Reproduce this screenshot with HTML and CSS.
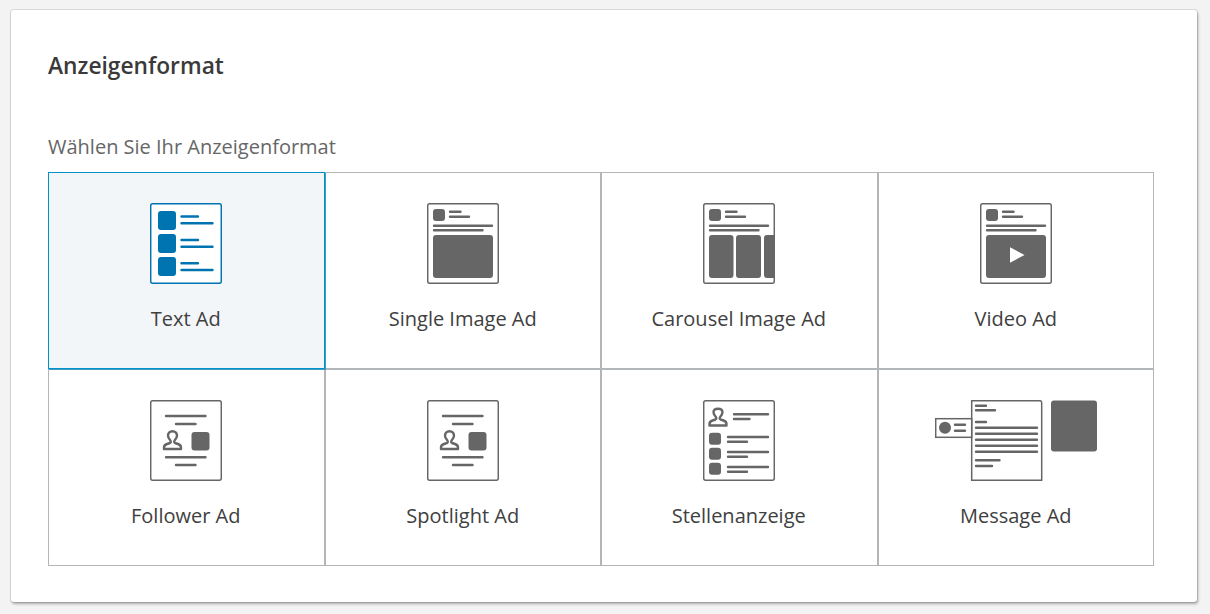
FILE: index.html
```html
<!DOCTYPE html>
<html lang="de">
<head>
<meta charset="utf-8">
<title>Anzeigenformat</title>
<link rel="stylesheet" href="styles.css">
</head>
<body>
<section class="card">
  <h2 class="title">Anzeigenformat</h2>
  <p class="sub">Wählen Sie Ihr Anzeigenformat</p>
  <div class="grid">
    <button class="cell active">
      <svg class="icon" width="72" height="81" viewBox="0 0 72 81">
        <rect class="doc" x="0.7" y="0.7" width="70.6" height="79.6" rx="2"/>
        <rect class="solid" x="8" y="8" width="18" height="19" rx="3"/>
        <rect class="solid" x="8" y="31" width="18" height="19" rx="3"/>
        <rect class="solid" x="8" y="54" width="18" height="19" rx="3"/>
        <path class="ln" d="M31.5 13.5H48M31.5 20.3H62.5M31.5 37H48M31.5 43.7H62.5M31.5 60.3H48M31.5 67H62.5"/>
      </svg>
      <span class="label">Text Ad</span>
    </button>
    <button class="cell">
      <svg class="icon" width="72" height="81" viewBox="0 0 72 81">
        <rect class="doc" x="0.7" y="0.7" width="70.6" height="79.6" rx="2"/>
        <rect class="solid" x="6" y="6" width="12" height="12" rx="3"/>
        <path class="ln" d="M23 8.7H33.5M23 13.7H42M7 22.7H65M7 27.3H55.5"/>
        <rect class="solid" x="6" y="32" width="60" height="43" rx="3"/>
      </svg>
      <span class="label">Single Image Ad</span>
    </button>
    <button class="cell">
      <svg class="icon" width="72" height="81" viewBox="0 0 72 81">
        <rect class="doc" x="0.7" y="0.7" width="70.6" height="79.6" rx="2"/>
        <rect class="solid" x="6" y="6" width="12" height="12" rx="3"/>
        <path class="ln" d="M23 8.7H33.5M23 13.7H42M7 22.7H65M7 27.3H55.5"/>
        <rect class="solid" x="6" y="32" width="24.5" height="43" rx="3"/>
        <rect class="solid" x="33" y="32" width="25" height="43" rx="3"/>
        <path class="solid" d="M64 32H71V75H64A3 3 0 0 1 61 72V35A3 3 0 0 1 64 32Z"/>
      </svg>
      <span class="label">Carousel Image Ad</span>
    </button>
    <button class="cell">
      <svg class="icon" width="72" height="81" viewBox="0 0 72 81">
        <rect class="doc" x="0.7" y="0.7" width="70.6" height="79.6" rx="2"/>
        <rect class="solid" x="6" y="6" width="12" height="12" rx="3"/>
        <path class="ln" d="M23 8.7H33.5M23 13.7H42M7 22.7H65M7 27.3H55.5"/>
        <rect class="solid" x="6" y="32" width="60" height="43" rx="3"/>
        <path class="play" d="M30 44.3L44.5 52L30 59.7Z"/>
      </svg>
      <span class="label">Video Ad</span>
    </button>
    <button class="cell">
      <svg class="icon" width="72" height="81" viewBox="0 0 72 81">
        <rect class="doc" x="0.7" y="0.7" width="70.6" height="79.6" rx="2"/>
        <path class="ln" d="M16 16H55.5M26 24H45.5M16 57.3H55.5M26 65H45.5"/>
        <path class="person" d="M14 49V47.5C14 45.5 15.5 44.5 17 44L20 43C21 42.6 21 41.5 20.4 40.5C19 39 18 37.5 18 35.8C18 33 20 31.2 22.5 31.2S27 33 27 35.8C27 37.5 26 39 24.6 40.5C24 41.5 24 42.6 25 43L28 44C29.5 44.5 31 45.5 31 47.5V49Z"/>
        <rect class="solid" x="41.5" y="32" width="18" height="18.5" rx="3"/>
      </svg>
      <span class="label">Follower Ad</span>
    </button>
    <button class="cell">
      <svg class="icon" width="72" height="81" viewBox="0 0 72 81">
        <rect class="doc" x="0.7" y="0.7" width="70.6" height="79.6" rx="2"/>
        <path class="ln" d="M16 16H55.5M26 24H45.5M16 57.3H55.5M26 65H45.5"/>
        <path class="person" d="M14 49V47.5C14 45.5 15.5 44.5 17 44L20 43C21 42.6 21 41.5 20.4 40.5C19 39 18 37.5 18 35.8C18 33 20 31.2 22.5 31.2S27 33 27 35.8C27 37.5 26 39 24.6 40.5C24 41.5 24 42.6 25 43L28 44C29.5 44.5 31 45.5 31 47.5V49Z"/>
        <rect class="solid" x="41.5" y="32" width="18" height="18.5" rx="3"/>
      </svg>
      <span class="label">Spotlight Ad</span>
    </button>
    <button class="cell">
      <svg class="icon" width="72" height="81" viewBox="0 0 72 81">
        <rect class="doc" x="0.7" y="0.7" width="70.6" height="79.6" rx="2"/>
        <path class="person" d="M6.500 25.500V24C6.500 22 8 21 9.500 20.500L12.500 19.500C13.500 19.100 13.500 18 12.900 17C11.500 15.500 10.500 14 10.500 12.300C10.500 9.700 12.500 8.700 15 8.700S19.500 9.700 19.500 12.300C19.500 14 18.500 15.500 17.100 17C16.500 18 16.500 19.100 17.500 19.500L20.500 20.500C22 21 23.500 22 23.500 24V25.500Z"/>
        <path class="ln" d="M31 14.300H65M31 19H46.500M25 37H65M25 41.700H44M25 52H65M25 56.700H44M25 67H65M25 71.700H44"/>
        <rect class="solid" x="6" y="32.700" width="12" height="12" rx="3"/>
        <rect class="solid" x="6" y="47.700" width="12" height="12" rx="3"/>
        <rect class="solid" x="6" y="62.700" width="12" height="12" rx="3"/>
      </svg>
      <span class="label">Stellenanzeige</span>
    </button>
    <button class="cell">
      <svg class="icon" width="162" height="81" viewBox="0 0 162 81">
        <path class="doc" d="M36.700 .7H104.700Q106.700 .7 106.700 2.700V80.300H36.700Z"/>
        <rect class="doc" x="0.700" y="18.700" width="36" height="18.600"/>
        <circle class="solid" cx="10" cy="27.700" r="6"/>
        <path class="ln" d="M20 24.700H30M20 30.700H30M41 5.700H51M41 10.300H60M41 22H51M41 27.700H102M41 33.700H102M41 39.700H102M41 45.700H102M41 51.700H102M41 60.300H64.500M41 66H57"/>
        <rect class="solid" x="116" y="0.500" width="46" height="51" rx="3"/>
      </svg>
      <span class="label">Message Ad</span>
    </button>
  </div>
</section>
</body>
</html>
```

FILE: styles.css
```css
* { box-sizing: border-box; }
html, body { margin: 0; padding: 0; }
body {
  height: 614px;
  overflow: hidden;
  background: #f3f3f3;
  font-family: "Open Sans", "Noto Sans", sans-serif;
  color: #3d3d3d;
  padding: 10px 13px 12px 11px;
}
.card {
  height: 592px;
  background: #fff;
  border-radius: 3px;
  box-shadow: 0 0 0 1px rgba(0,0,0,.1), 1px 2px 3px rgba(0,0,0,.3);
  padding: 42px 43px 0 37px;
}
.title {
  margin: 0;
  font-size: 22.75px;
  line-height: 28px;
  font-weight: 600;
  color: #3a3a3a;
}
.sub {
  margin: 53px 0 0;
  font-size: 20px;
  line-height: 28px;
  color: #666;
}
.grid {
  margin-top: 11px;
  display: grid;
  grid-template-columns: repeat(4, 276.5px);
  grid-template-rows: repeat(2, 197px);
}
.cell {
  padding: 30px 0 0;
  display: flex;
  flex-direction: column;
  align-items: center;
  background: #fff;
  border: 1px solid #b3b6b9;
  font: inherit;
  color: inherit;
}
.cell:nth-child(odd) { padding-right: 1px; }
.active {
  position: relative;
  z-index: 1;
  background: #f3f6f8;
  border-color: #0091ca;
  box-shadow: 1px 1px 0 rgba(0, 145, 202, .65);
}
.icon { display: block; }
.label {
  margin-top: 21px;
  font-size: 20px;
  line-height: 28px;
  color: #404040;
}
.doc { fill: #fff; stroke: #666; stroke-width: 1.5; }
.solid { fill: #666; }
.ln { fill: none; stroke: #666; stroke-width: 2.4; stroke-linecap: round; }
.person { fill: none; stroke: #666; stroke-width: 2.4; stroke-linejoin: round; }
.play { fill: #fff; }
.active .doc { stroke: #0073b1; }
.active .solid { fill: #0073b1; }
.active .ln { stroke: #0073b1; }
```
